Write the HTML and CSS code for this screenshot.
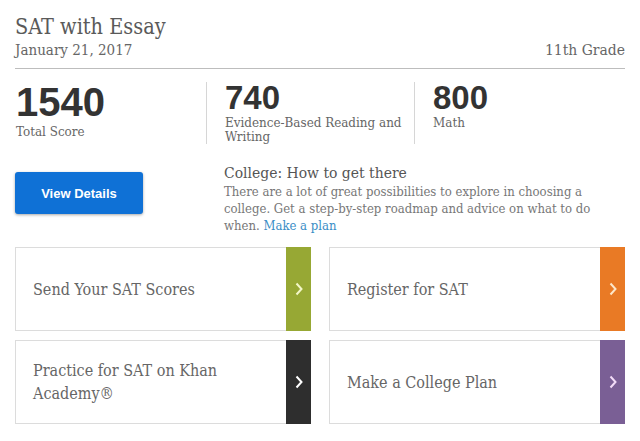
FILE: index.html
```html
<!DOCTYPE html>
<html lang="en">
<head>
<meta charset="utf-8">
<title>SAT with Essay</title>
<link rel="stylesheet" href="styles.css">
</head>
<body>
<div class="page">
  <header class="head">
    <h1 class="title">SAT with Essay</h1>
    <div class="subrow">
      <span class="date">January 21, 2017</span>
      <span class="grade">11th Grade</span>
    </div>
  </header>
  <div class="rule"></div>
  <section class="scores">
    <div class="score score-total">
      <div class="num num-big">1540</div>
      <div class="label">Total Score</div>
    </div>
    <div class="score score-sec">
      <div class="num">740</div>
      <div class="label">Evidence-Based Reading and<br>Writing</div>
    </div>
    <div class="score score-sec">
      <div class="num">800</div>
      <div class="label">Math</div>
    </div>
  </section>
  <section class="mid">
    <div class="btn-col"><a class="btn" href="#">View Details</a></div>
    <div class="college">
      <h2 class="college-title">College: How to get there</h2>
      <p class="college-text">There are a lot of great possibilities to explore in choosing a college. Get a step-by-step roadmap and advice on what to do when. <a class="link" href="#">Make a plan</a></p>
    </div>
  </section>
  <section class="cards">
    <a class="card" href="#"><span class="card-text">Send Your SAT Scores</span><span class="tab tab-green"><svg width="8" height="14" viewBox="0 0 8 14"><polyline points="1.5,1.5 6.5,7 1.5,12.5" fill="none" stroke="currentColor" stroke-width="2"/></svg></span></a>
    <a class="card" href="#"><span class="card-text">Register for SAT</span><span class="tab tab-orange"><svg width="8" height="14" viewBox="0 0 8 14"><polyline points="1.5,1.5 6.5,7 1.5,12.5" fill="none" stroke="currentColor" stroke-width="2"/></svg></span></a>
    <a class="card" href="#"><span class="card-text">Practice for SAT on Khan<br>Academy®</span><span class="tab tab-dark"><svg width="8" height="14" viewBox="0 0 8 14"><polyline points="1.5,1.5 6.5,7 1.5,12.5" fill="none" stroke="currentColor" stroke-width="2"/></svg></span></a>
    <a class="card" href="#"><span class="card-text">Make a College Plan</span><span class="tab tab-purple"><svg width="8" height="14" viewBox="0 0 8 14"><polyline points="1.5,1.5 6.5,7 1.5,12.5" fill="none" stroke="currentColor" stroke-width="2"/></svg></span></a>
  </section>
</div>
</body>
</html>
```
FILE: styles.css
```css
* { box-sizing: border-box; }
html, body { margin: 0; padding: 0; background: #fff; }
body {
  font-family: "DejaVu Serif", serif;
  font-stretch: condensed;
  color: #666;
}
.page {
  width: 640px;
  padding: 13px 15px 0 15px;
}
.head { display: flex; flex-direction: column; }
.title {
  margin: 0;
  font-size: 21.5px;
  font-weight: normal;
  line-height: 27px;
  color: #5a5a5a;
}
.subrow {
  display: flex;
  justify-content: space-between;
  font-size: 15px;
  line-height: 20px;
  color: #666;
}
.grade { font-size: 15.5px; }
.rule {
  height: 1px;
  background: #bdbdbd;
  margin-top: 8px;
}
.scores {
  display: flex;
  margin-top: 13px;
  height: 62px;
}
.score { display: flex; flex-direction: column; }
.score-total { width: 191px; padding-left: 1px; }
.score-sec { width: 208px; border-left: 1px solid #d6d6d6; padding-left: 18px; }
.num {
  font-family: "Liberation Sans", Arial, sans-serif;
  font-weight: bold;
  font-size: 33px;
  line-height: 32px;
  color: #333;
}
.num-big { font-size: 40px; line-height: 40px; }
.label {
  font-size: 13.3px;
  line-height: 14px;
  color: #666;
}
.score-total .label { margin-top: 3px; }
.score-sec .label { margin-top: 2px; }
.mid {
  display: flex;
  margin-top: 20px;
}
.btn-col { width: 191px; padding-top: 8px; }
.btn {
  display: flex;
  align-items: center;
  justify-content: center;
  width: 128px;
  height: 42px;
  background: #0f71d6;
  border-radius: 3px;
  box-shadow: 0 1px 3px rgba(0,0,0,0.35);
  color: #fff;
  font-family: "Liberation Sans", Arial, sans-serif;
  font-stretch: normal;
  font-weight: bold;
  font-size: 13px;
  text-decoration: none;
}
.college { padding-left: 18px; width: 410px; }
.college-title {
  margin: 0;
  font-size: 15.5px;
  font-weight: normal;
  line-height: 19px;
  color: #555;
}
.college-text {
  margin: 0;
  font-size: 13px;
  line-height: 17px;
  color: #777;
}
.link { color: #3a8ec6; text-decoration: none; }
.cards {
  display: grid;
  grid-template-columns: 296px 296px;
  column-gap: 18px;
  row-gap: 9px;
  margin-top: 13px;
}
.card {
  display: flex;
  height: 84px;
  border: 1px solid #dcdcdc;
  border-right: none;
  text-decoration: none;
  background: #fff;
}
.card-text {
  flex: 1;
  display: flex;
  align-items: center;
  padding-left: 17px;
  font-size: 16px;
  line-height: 23px;
  color: #666;
}
.tab {
  width: 25px;
  margin: -1px 0;
  display: flex;
  align-items: center;
  justify-content: center;
  color: #fff;
}
.tab-green { background: #97a834; color: #f3f7c8; }
.tab-orange { background: #e97a25; color: #fde7c9; }
.tab-dark { background: #2e2e2e; }
.tab-purple { background: #7a5f95; color: #f2dcf7; }
```
